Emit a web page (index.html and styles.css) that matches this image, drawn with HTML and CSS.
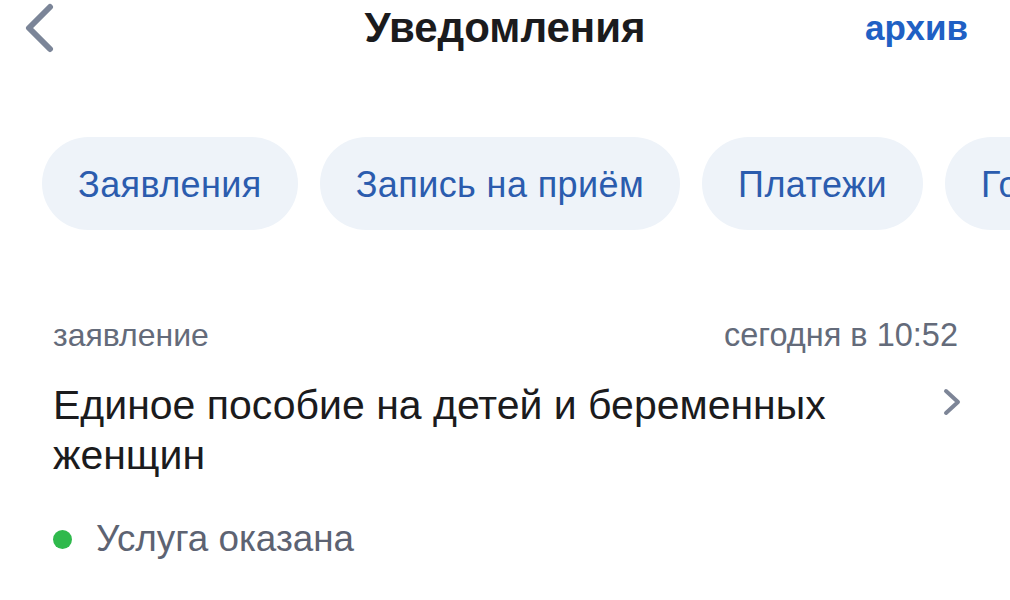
FILE: index.html
```html
<!DOCTYPE html>
<html lang="ru">
<head>
<meta charset="utf-8">
<title>Уведомления</title>
<link rel="stylesheet" href="styles.css">
</head>
<body>
<div class="screen">
  <header class="topbar">
    <button class="back" aria-label="Назад">
      <svg width="32" height="50" viewBox="0 0 32 50"><polyline points="25,4 4,25 25,46" fill="none" stroke="#7b8598" stroke-width="6" stroke-linecap="round" stroke-linejoin="round"/></svg>
    </button>
    <h1 class="title">Уведомления</h1>
    <a class="archive">архив</a>
  </header>

  <nav class="chips">
    <span class="chip">Заявления</span>
    <span class="chip">Запись на приём</span>
    <span class="chip">Платежи</span>
    <span class="chip">Госпочта</span>
  </nav>

  <section class="item">
    <div class="meta">
      <span class="kind">заявление</span>
      <span class="time">сегодня в 10:52</span>
    </div>
    <div class="head">
      <p class="name">Единое пособие на детей и беременных женщин</p>
      <svg class="arrow" width="20" height="30" viewBox="0 0 20 30"><polyline points="4,4 16,15 4,26" fill="none" stroke="#7d8597" stroke-width="4" stroke-linecap="round" stroke-linejoin="round"/></svg>
    </div>
    <div class="status">
      <span class="dot"></span>
      <span class="status-text">Услуга оказана</span>
    </div>
  </section>
</div>
</body>
</html>
```

FILE: styles.css
```css
html, body {
  margin: 0;
  padding: 0;
  background: #ffffff;
}

body {
  font-family: "Liberation Sans", Arial, sans-serif;
  color: #1b1b1d;
  overflow: hidden;
}

.screen {
  width: 1010px;
  height: 600px;
  overflow: hidden;
}

.topbar {
  display: grid;
  grid-template-columns: 1fr auto 1fr;
  align-items: center;
  height: 56px;
  padding: 0 42px;
}

.back {
  justify-self: start;
  margin-left: -17px;
  border: 0;
  background: none;
  padding: 0;
  display: flex;
}

.title {
  margin: 0;
  font-size: 42px;
  font-weight: 700;
  color: #1b1b1d;
}

.archive {
  justify-self: end;
  font-size: 35px;
  font-weight: 700;
  color: #2060c4;
}

.chips {
  display: flex;
  gap: 22px;
  margin-top: 81px;
  padding-left: 42px;
  white-space: nowrap;
}

.chip {
  flex: none;
  height: 93px;
  box-sizing: border-box;
  padding: 3px 36px 0;
  line-height: 90px;
  border-radius: 47px;
  background: #eef3f9;
  color: #2b5cae;
  font-size: 36px;
  letter-spacing: 0.4px;
}

.item {
  padding: 0 52px 0 53px;
}

.meta {
  display: flex;
  justify-content: space-between;
  margin-top: 85px;
  font-size: 32px;
  line-height: 40px;
  color: #646b7a;
}

.time {
  font-size: 32.5px;
}

.head {
  display: flex;
  justify-content: space-between;
  align-items: flex-start;
  margin-top: 25px;
}

.name {
  margin: 0;
  width: 840px;
  font-size: 41px;
  line-height: 50px;
  color: #1b1b1d;
}

.arrow {
  margin-top: 7px;
  margin-right: -4px;
}

.status {
  display: flex;
  align-items: center;
  gap: 24px;
  margin-top: 37px;
  height: 44px;
}

.dot {
  width: 19px;
  height: 19px;
  border-radius: 50%;
  background: #2fb94c;
}

.status-text {
  font-size: 36.8px;
  color: #5d6372;
}
```
